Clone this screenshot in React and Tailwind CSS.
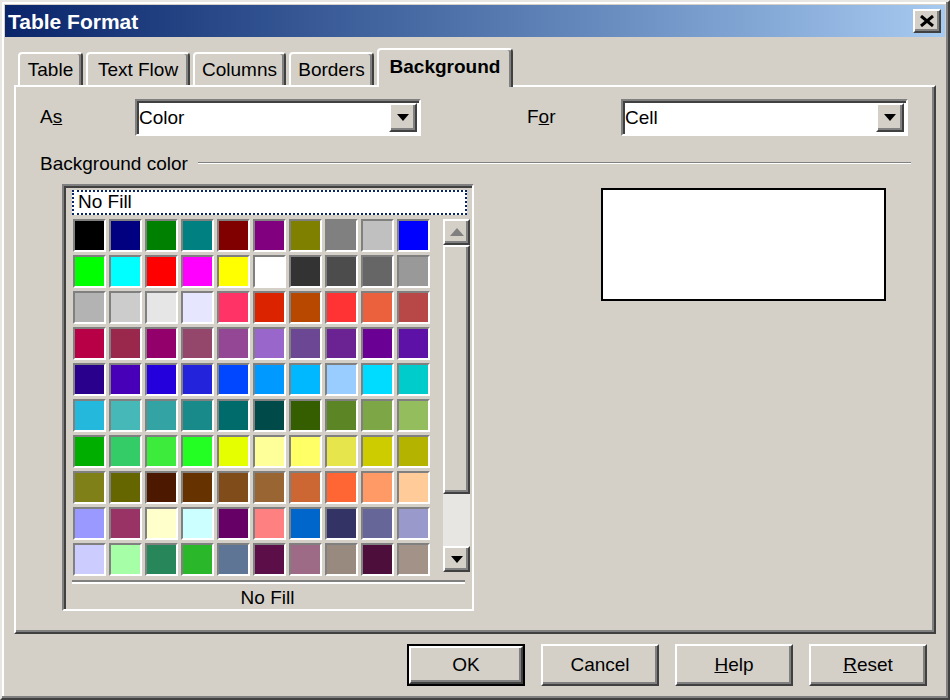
import React from 'react';

const raised =
  'border-2 border-t-white border-l-white border-r-[#404040] border-b-[#404040] shadow-[inset_-2px_-2px_0_#808080]';
const sunken =
  'border-2 border-t-[#808080] border-l-[#808080] border-r-white border-b-white shadow-[inset_2px_2px_0_#404040]';

const palette = [
  ['#000000', '#000080', '#008000', '#008080', '#800000', '#800080', '#808000', '#808080', '#c0c0c0', '#0000ff'],
  ['#00ff00', '#00ffff', '#ff0000', '#ff00ff', '#ffff00', '#ffffff', '#333333', '#4c4c4c', '#666666', '#999999'],
  ['#b3b3b3', '#cccccc', '#e6e6e6', '#e6e6ff', '#ff3366', '#dc2300', '#b84700', '#ff3333', '#eb613d', '#b84747'],
  ['#b80047', '#99284c', '#94006b', '#94476b', '#944794', '#9966cc', '#6b4794', '#6b2394', '#6b0094', '#5e11a6'],
  ['#28008c', '#4700b8', '#2300dc', '#2323dc', '#0047ff', '#0099ff', '#00b8ff', '#99ccff', '#00dcff', '#00cccc'],
  ['#23b8dc', '#47b8b8', '#33a3a3', '#198a8a', '#006b6b', '#004a4a', '#355e00', '#5c8526', '#7da647', '#94bd5e'],
  ['#00ae00', '#33cc66', '#3deb3d', '#23ff23', '#e6ff00', '#ffff99', '#ffff66', '#e6e64c', '#cccc00', '#b3b300'],
  ['#808019', '#666600', '#4c1900', '#663300', '#804c19', '#996633', '#cc6633', '#ff6633', '#ff9966', '#ffcc99'],
  ['#9999ff', '#993366', '#ffffcc', '#ccffff', '#660066', '#ff8080', '#0066cc', '#333366', '#666699', '#9999cc'],
  ['#ccccff', '#a6ffa6', '#27865a', '#2ab82a', '#5f7595', '#5c0e48', '#9e6b87', '#998a7f', '#4e0e3b', '#a29287'],
];

const tabs = [
  { label: 'Table', w: 'w-[65px]' },
  { label: 'Text Flow', w: 'w-[104px]' },
  { label: 'Columns', w: 'w-[93px]' },
  { label: 'Borders', w: 'w-[85px]' },
];

const DownArrow = ({ color = '#000' }) => (
  <svg width="12" height="7" viewBox="0 0 12 7">
    <path d="M0 0 H12 L6 7 Z" fill={color} />
  </svg>
);

const UpArrow = ({ color = '#000' }) => (
  <svg width="14" height="8" viewBox="0 0 14 8">
    <path d="M0 8 H14 L7 0 Z" fill={color} />
  </svg>
);

const Combo = ({ value, width }) => (
  <div className={`${sunken} ${width} h-[37px] bg-white flex items-center`}>
    <span className="pl-[2px] pt-[1px] flex-1">{value}</span>
    <div className={`${raised} bg-[#d4d0c8] w-[28px] h-[29px] mr-[2px] flex items-center justify-center`}>
      <DownArrow />
    </div>
  </div>
);

const Button = ({ children, isDefault }) => (
  <div className={isDefault ? 'border-2 border-black' : ''}>
    <div
      className={`${raised} bg-[#d4d0c8] ${isDefault ? 'w-[114px] h-[38px]' : 'w-[118px] h-[42px]'} flex items-center justify-center`}
    >
      {children}
    </div>
  </div>
);

export default function App() {
  return (
    <div
      className="w-[950px] h-[700px] bg-[#d4d0c8] border-2 border-t-[#e8e6e2] border-l-[#e8e6e2] border-r-[#404040] border-b-[#404040] shadow-[inset_-2px_-2px_0_#808080,inset_2px_2px_0_white] p-[3px] flex flex-col text-[19px] text-black"
      style={{ fontFamily: '"Liberation Sans", Arial, sans-serif' }}
    >
      {/* Title bar */}
      <div className="h-[32px] shrink-0 bg-gradient-to-r from-[#0a246a] to-[#a6caf0] flex items-center justify-between pl-[3px] pr-[4px]">
        <span className="text-white font-bold text-[21px] leading-none">Table Format</span>
        <div className={`${raised} bg-[#d4d0c8] w-[28px] h-[24px] flex items-center justify-center`}>
          <svg width="14" height="12" viewBox="0 0 14 12">
            <path d="M1 1 L13 11 M13 1 L1 11" stroke="#000" strokeWidth="3" />
          </svg>
        </div>
      </div>

      {/* Tabs */}
      <div className="mt-[11px] h-[37px] shrink-0 flex items-end gap-[3px] pl-[13px]">
        {tabs.map((t) => (
          <div
            key={t.label}
            className={`${t.w} h-[33px] border-t-2 border-l-2 border-r-2 border-t-white border-l-white border-r-[#404040] shadow-[inset_-2px_0_0_#808080] rounded-t-[4px] flex items-center justify-center pt-[1px]`}
          >
            {t.label}
          </div>
        ))}
        <div className="w-[136px] h-[39px] mb-[-2px] relative z-10 bg-[#d4d0c8] border-t-2 border-l-2 border-r-2 border-t-white border-l-white border-r-[#404040] shadow-[inset_-2px_0_0_#808080] rounded-t-[4px] flex items-center justify-center font-bold pb-[3px]">
          Background
        </div>
      </div>

      {/* Panel */}
      <div className="ml-[9px] mr-[9px] h-[549px] shrink-0 border-2 border-t-white border-l-white border-r-[#404040] border-b-[#404040] shadow-[inset_-2px_-2px_0_#808080] flex flex-col">
        {/* As / For row */}
        <div className="mt-[12px] flex items-center pl-[24px]">
          <span className="w-[95px]">
            A<u>s</u>
          </span>
          <Combo value="Color" width="w-[286px]" />
          <span className="w-[106px]" />
          <span className="w-[94px]">
            F<u>o</u>r
          </span>
          <Combo value="Cell" width="w-[287px]" />
        </div>

        {/* Background color heading */}
        <div className="mt-[16px] h-[22px] flex items-center pl-[24px] pr-[23px]">
          <span className="leading-none">Background color</span>
          <div className="flex-1 ml-[10px] border-t border-t-[#808080] border-b border-b-white" />
        </div>

        {/* List + preview */}
        <div className="mt-[10px] flex items-start pl-[46px]">
          <div className={`${sunken} w-[412px] h-[427px] bg-[#d4d0c8] flex flex-col pt-[4px] pl-[8px] pr-[1px]`}>
            <div className="w-[395px] h-[25px] bg-white border-2 border-dotted border-[#0a246a] flex items-center pl-[4px]">
              No Fill
            </div>
            <div className="mt-[4px] flex items-start">
              <div className="ml-[1px] grid grid-cols-10 gap-[3px] shrink-0">
                {palette.flat().map((c, i) => (
                  <div
                    key={i}
                    className="w-[33px] h-[33px] border-2 border-t-[#808080] border-l-[#808080] border-r-white border-b-white"
                  >
                    <div className="w-full h-full" style={{ backgroundColor: c }} />
                  </div>
                ))}
              </div>
              <div className="ml-[13px] w-[27px] shrink-0 h-[353px] flex flex-col bg-[#e8e6e2]">
                <div className={`${raised} bg-[#d4d0c8] h-[26px] shrink-0 flex items-center justify-center`}>
                  <UpArrow color="#808080" />
                </div>
                <div className={`${raised} bg-[#d4d0c8] h-[249px] shrink-0`} />
                <div className="flex-1" />
                <div className={`${raised} bg-[#d4d0c8] h-[26px] shrink-0 flex items-center justify-center`}>
                  <DownArrow />
                </div>
              </div>
            </div>
            <div className="mt-[4px] mr-[6px] border-t-2 border-t-[#808080] border-b-2 border-b-white" />
            <div className="h-[28px] flex items-center justify-center pr-[8px]">No Fill</div>
          </div>
          <div className="ml-[127px] mt-[4px] w-[285px] h-[113px] bg-white border-2 border-black" />
        </div>
      </div>

      {/* Buttons */}
      <div className="mt-[10px] flex justify-end gap-[16px] pr-[18px]">
        <Button isDefault>OK</Button>
        <Button>Cancel</Button>
        <Button>
          <u>H</u>elp
        </Button>
        <Button>
          <u>R</u>eset
        </Button>
      </div>
    </div>
  );
}
